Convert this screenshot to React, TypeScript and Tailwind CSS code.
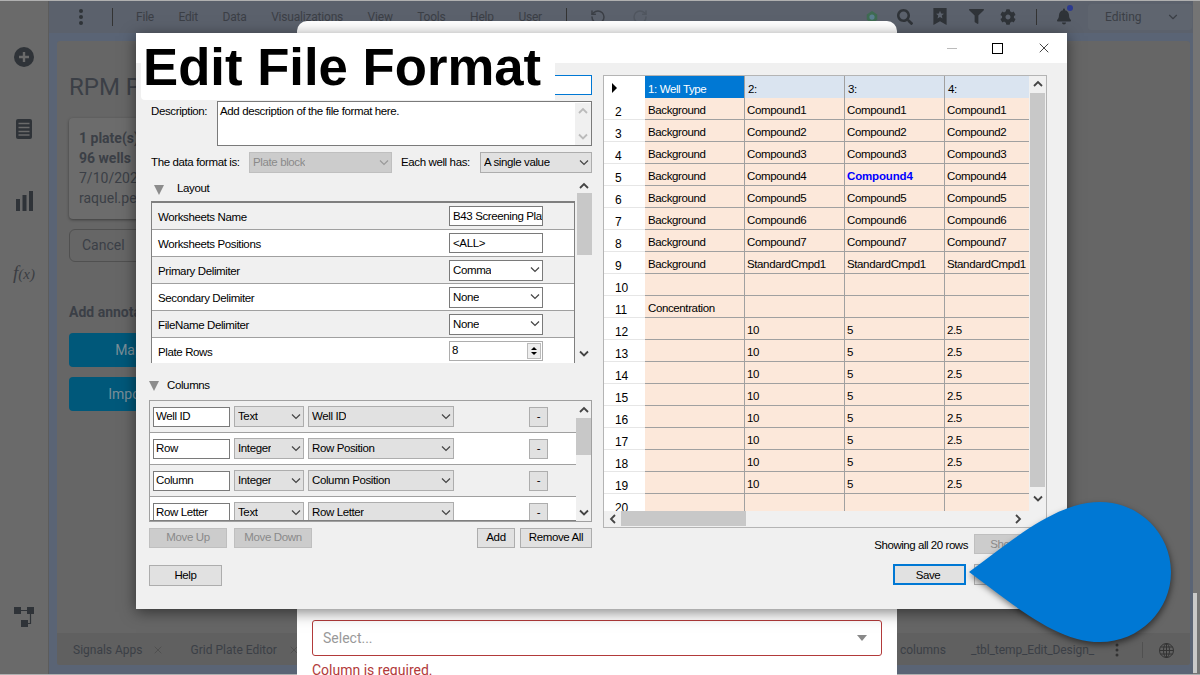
import React from "react";
import { FaSearch, FaFilter, FaCog, FaBell } from "react-icons/fa";
import { LuChevronDown, LuRotateCcw, LuRotateCw, LuX } from "react-icons/lu";

const ui = "font-['Liberation_Sans',Arial,sans-serif]";

function Chev({ dir = "down", cls = "text-[#444]", sw = 1.2 }: { dir?: "down" | "up" | "left" | "right"; cls?: string; sw?: number }) {
  const d = { down: "M1 2.5 L5 6.5 L9 2.5", up: "M1 7 L5 3 L9 7", left: "M7 1 L3 5 L7 9", right: "M3 1 L7 5 L3 9" }[dir];
  return (
    <svg width="10" height="10" viewBox="0 0 10 10" className={cls}>
      <path d={d} fill="none" stroke="currentColor" strokeWidth={sw} />
    </svg>
  );
}

function Combo({ text, w, h = "h-[21px]", bg = "bg-[#e1e1e1]", border = "border-[#adadad]", fg = "text-black", chev = "text-[#444]" }: { text: string; w: string; h?: string; bg?: string; border?: string; fg?: string; chev?: string }) {
  return (
    <div className={`flex items-center justify-between border pl-[3px] pr-[2px] ${w} ${h} ${bg} ${border} ${fg}`}>
      <span className="truncate pt-px">{text}</span>
      <Chev cls={chev} />
    </div>
  );
}

function Btn({ text, w, h = "h-[20px]", disabled }: { text: string; w: string; h?: string; disabled?: boolean }) {
  return (
    <div className={`flex items-center justify-center border ${w} ${h} ${disabled ? "border-[#bfbfbf] bg-[#cccccc] text-[#8a8a8a]" : "border-[#adadad] bg-[#e1e1e1] text-black"}`}>
      {text}
    </div>
  );
}

function Tri() {
  return (
    <svg width="10" height="10" viewBox="0 0 10 10">
      <path d="M0 0 H10 L5 10 Z" fill="#8c8c8c" />
    </svg>
  );
}

const layoutRows: [string, React.ReactNode][] = [
  ["Worksheets Name", <div className="flex h-[20px] w-[94px] items-center overflow-hidden whitespace-nowrap border border-[#7a7a7a] bg-white pl-[3px] pt-px">B43 Screening Plate</div>],
  ["Worksheets Positions", <div className="flex h-[20px] w-[94px] items-center border border-[#7a7a7a] bg-white pl-[3px] pt-px">{"<ALL>"}</div>],
  ["Primary Delimiter", <Combo text="Comma" w="w-[94px]" bg="bg-white" border="border-[#7a7a7a]" />],
  ["Secondary Delimiter", <Combo text="None" w="w-[94px]" bg="bg-white" border="border-[#7a7a7a]" />],
  ["FileName Delimiter", <Combo text="None" w="w-[94px]" bg="bg-white" border="border-[#7a7a7a]" />],
  [
    "Plate Rows",
    <div className="flex h-[20px] w-[94px] items-center justify-between border border-[#adadad] bg-white pl-[2px] pr-[1px]">
      <span>8</span>
      <span className="flex h-[16px] w-[14px] flex-col items-center justify-center gap-[2px] border border-[#bbb] bg-[#eee]">
        <span className="h-0 w-0 border-x-[3px] border-b-[3px] border-x-transparent border-b-black" />
        <span className="h-0 w-0 border-x-[3px] border-t-[3px] border-x-transparent border-t-black" />
      </span>
    </div>,
  ],
];

const colRows = [
  ["Well ID", "Text", "Well ID"],
  ["Row", "Integer", "Row Position"],
  ["Column", "Integer", "Column Position"],
  ["Row Letter", "Text", "Row Letter"],
];

const gridRows: [string, string, string, string, string, boolean?][] = [
  ["2", "Background", "Compound1", "Compound1", "Compound1"],
  ["3", "Background", "Compound2", "Compound2", "Compound2"],
  ["4", "Background", "Compound3", "Compound3", "Compound3"],
  ["5", "Background", "Compound4", "Compound4", "Compound4", true],
  ["6", "Background", "Compound5", "Compound5", "Compound5"],
  ["7", "Background", "Compound6", "Compound6", "Compound6"],
  ["8", "Background", "Compound7", "Compound7", "Compound7"],
  ["9", "Background", "StandardCmpd1", "StandardCmpd1", "StandardCmpd1"],
  ["10", "", "", "", ""],
  ["11", "Concentration", "", "", ""],
  ["12", "", "10", "5", "2.5"],
  ["13", "", "10", "5", "2.5"],
  ["14", "", "10", "5", "2.5"],
  ["15", "", "10", "5", "2.5"],
  ["16", "", "10", "5", "2.5"],
  ["17", "", "10", "5", "2.5"],
  ["18", "", "10", "5", "2.5"],
  ["19", "", "10", "5", "2.5"],
  ["20", "", "", "", ""],
];

function Grid() {
  return (
    <div className="flex h-[453px] w-[444px] flex-col border border-[#b4b4b4] bg-[#f0f0f0] leading-[14px] text-black">
      <div className="flex min-h-0 flex-1">
        <div className="h-[435px] w-[425px] overflow-hidden">
          <div className="grid h-[22px] grid-cols-[41px_100px_100px_100px_84px] grid-rows-[22px] border-b border-[#a0a0a0]">
            <div className="flex items-center bg-white pl-[8px] pt-[2px]">
              <span className="h-0 w-0 border-y-[5px] border-l-[5px] border-y-transparent border-l-black" />
            </div>
            <div className="flex items-center border-r border-[#a0a0a0] bg-[#0078d4] pl-[3px] pt-[3px] text-white">1: Well Type</div>
            <div className="flex items-center border-r border-[#a0a0a0] bg-[#dae4f0] pl-[3px] pt-[3px]">2:</div>
            <div className="flex items-center border-r border-[#a0a0a0] bg-[#dae4f0] pl-[3px] pt-[3px]">3:</div>
            <div className="flex items-center bg-[#dae4f0] pl-[3px] pt-[3px]">4:</div>
          </div>
          {gridRows.map((r) => (
            <div key={r[0]} className="grid h-[22px] grid-cols-[41px_100px_100px_100px_84px] grid-rows-[22px]">
              <div className="flex items-center border-b border-[#e6e6e6] bg-white pl-[11px] pt-[7px] text-[12px] tracking-[-0.2px]">{r[0]}</div>
              <div className="flex items-center border-b border-r border-[#a0a0a0] bg-[#fce8da] pl-[3px] pt-[3px]">{r[1]}</div>
              <div className="flex items-center border-b border-r border-[#a0a0a0] bg-[#fce8da] pl-[2px] pt-[3px]">{r[2]}</div>
              <div className={`flex items-center border-b border-r border-[#a0a0a0] bg-[#fce8da] pl-[2px] pt-[3px] ${r[5] ? "font-bold tracking-[-0.15px] text-[#0000ff]" : ""}`}>{r[3]}</div>
              <div className="flex items-center border-b border-[#a0a0a0] bg-[#fce8da] pl-[2px] pt-[3px]">{r[4]}</div>
            </div>
          ))}
        </div>
        <div className="flex w-[17px] flex-col items-center">
          <div className="flex h-[17px] items-center"><Chev dir="up" sw={1.8} /></div>
          <div className="h-[395px] w-[15px] bg-[#c8c8c8]" />
          <div className="flex h-[23px] items-center"><Chev dir="down" sw={1.8} /></div>
        </div>
      </div>
      <div className="flex h-[17px] items-center">
        <div className="flex w-[17px] justify-center"><Chev dir="left" sw={1.8} /></div>
        <div className="h-[15px] w-[125px] bg-[#c8c8c8]" />
        <div className="flex-1" />
        <div className="flex w-[34px] justify-start pl-[1px]"><Chev dir="right" sw={1.8} /></div>
      </div>
    </div>
  );
}

function Dialog() {
  return (
    <div className={`absolute left-[136px] top-[33px] flex h-[576px] w-[931px] flex-col bg-[#f0f0f0] text-[11.5px] tracking-[-0.38px] text-black shadow-[0_3px_14px_rgba(0,0,0,0.5)] ${ui}`}>
      <div className="flex h-[30px] items-center justify-end bg-white">
        <div className="mr-[35px] h-px w-[10px] bg-[#bbb]" />
        <div className="mr-[33px] h-[11px] w-[11px] border border-black" />
        <LuX className="mr-[15px] h-[16px] w-[16px] text-black" strokeWidth={1.1} />
      </div>
      <div className="flex flex-1 pl-[13px]">
        <div className="flex w-[443px] flex-col">
          <div className="mt-[12px] flex justify-end">
            <div className="h-[20px] w-[375px] border border-[#0078d4] bg-white" />
          </div>
          <div className="ml-[2px] mt-[6px] flex">
            <div className="w-[66px] pt-[2px]">Description:</div>
            <div className="flex h-[45px] w-[375px] justify-between border border-[#7a7a7a] bg-white pl-[2px] pt-[1px]">
              <span>Add description of the file format here.</span>
              <div className="flex h-full w-[16px] flex-col items-center justify-between bg-[#f0f0f0] py-[3px]">
                <Chev dir="up" cls="text-[#bbb]" sw={1.8} />
                <Chev dir="down" cls="text-[#bbb]" sw={1.8} />
              </div>
            </div>
          </div>
          <div className="ml-[2px] mt-[6px] flex items-center">
            <div className="w-[98px]">The data format is:</div>
            <Combo text="Plate block" w="w-[143px]" bg="bg-[#cccccc]" border="border-[#bfbfbf]" fg="text-[#8a8a8a]" chev="text-[#999]" />
            <div className="ml-[9px] w-[79px]">Each well has:</div>
            <Combo text="A single value" w="w-[112px]" />
          </div>
          <div className="mt-[5px] flex h-[185px]">
            <div className="ml-[2px] flex w-[424px] flex-col">
              <div className="flex h-[23px] items-center pl-[3px]">
                <Tri />
                <span className="ml-[13px] pb-[2px]">Layout</span>
              </div>
              <div className="h-[162px] overflow-hidden border-x border-t-2 border-x-[#7f7f7f] border-t-[#7f7f7f] bg-white">
                {layoutRows.map(([label, ctl], i) => (
                  <div key={label} className={`flex h-[27px] shrink-0 items-center justify-between border-b border-[#a0a0a0] pl-[6px] pr-[31px] ${i % 2 === 0 ? "bg-[#f0f0f0]" : "bg-white"}`}>
                    <span className="pt-[3px]">{label}</span>
                    {ctl}
                  </div>
                ))}
              </div>
            </div>
            <div className="ml-px flex w-[16px] flex-col items-center">
              <div className="flex h-[15px] items-center"><Chev dir="up" sw={1.8} /></div>
              <div className="h-[62px] w-[15px] bg-[#c8c8c8]" />
              <div className="flex-1" />
              <div className="flex h-[18px] items-center"><Chev dir="down" sw={1.8} /></div>
            </div>
          </div>
          <div className="flex h-[37px] items-center pt-[8px]">
            <Tri />
            <span className="ml-[8px]">Columns</span>
          </div>
          <div className="flex h-[122px] border border-[#a0a0a0]">
            <div className="w-[426px] overflow-hidden border-b border-[#7f7f7f]">
              {colRows.map((r, i) => (
                <div key={r[0]} className={`flex h-[32px] items-center border-b border-[#a0a0a0] pl-[3px] ${i % 2 === 0 ? "bg-[#f0f0f0]" : "bg-white"}`}>
                  <div className="flex h-[20px] w-[77px] items-center border border-[#7a7a7a] bg-white pl-[2px]">{r[0]}</div>
                  <div className="ml-[4px]"><Combo text={r[1]} w="w-[70px]" /></div>
                  <div className="ml-[4px]"><Combo text={r[2]} w="w-[146px]" /></div>
                  <div className="ml-[75px]"><Btn text="-" w="w-[19px]" /></div>
                </div>
              ))}
            </div>
            <div className="flex flex-1 flex-col items-center">
              <div className="flex h-[17px] items-center"><Chev dir="up" sw={1.8} /></div>
              <div className="h-[37px] w-[15px] bg-[#c8c8c8]" />
              <div className="flex-1" />
              <div className="flex h-[16px] items-center"><Chev dir="down" sw={1.8} /></div>
            </div>
          </div>
          <div className="mt-[6px] flex">
            <Btn text="Move Up" w="w-[78px]" disabled />
            <div className="ml-[7px]"><Btn text="Move Down" w="w-[78px]" disabled /></div>
            <div className="ml-auto"><Btn text="Add" w="w-[38px]" /></div>
            <div className="ml-[5px]"><Btn text="Remove All" w="w-[72px]" /></div>
          </div>
          <div className="mt-[17px]"><Btn text="Help" w="w-[73px]" h="h-[21px]" /></div>
        </div>
        <div className="ml-[11px] flex w-[444px] flex-col pt-[12px]">
          <Grid />
          <div className="mt-[6px] flex items-center justify-end">
            <span className="mr-[6px] pt-[3px] tracking-[-0.45px]">Showing all 20 rows</span>
            <Btn text="Show all" w="w-[73px]" disabled />
          </div>
          <div className="mt-[10px] flex justify-end gap-[8px]">
            <div className="flex h-[21px] w-[73px] items-center justify-center border-2 border-[#0078d4] bg-[#e1e1e1] pr-[3px] pt-px">Save</div>
            <Btn text="Cancel" w="w-[73px]" h="h-[21px]" />
          </div>
        </div>
      </div>
    </div>
  );
}

function Background() {
  const menu = ["File", "Edit", "Data", "Visualizations", "View", "Tools", "Help", "User"];
  return (
    <div className="flex h-full w-full font-['Roboto',sans-serif] text-[#3b3f46]">
      <div className="flex h-full w-[49px] flex-col items-center border-r border-[#5c5c5c] bg-[#6a6a6a] text-[#2f3338]">
        <svg className="mt-[47px]" width="20" height="20" viewBox="0 0 20 20">
          <circle cx="10" cy="10" r="10" fill="#2f3338" />
          <path d="M10 5v10M5 10h10" stroke="#6a6a6a" strokeWidth="2.4" />
        </svg>
        <svg className="mt-[52px]" width="16" height="20" viewBox="0 0 16 20">
          <rect x="0" y="0" width="16" height="20" rx="2" fill="#2f3338" />
          <path d="M2.5 4.5h11M2.5 8.500h11M2.5 12.500h11M2.500 16h11" stroke="#6a6a6a" strokeWidth="1.4" />
        </svg>
        <svg className="mt-[52px]" width="17" height="20" viewBox="0 0 17 20">
          <path d="M0 8h4v12H0zM6.500 4h4v16h-4zM13 0h4v20h-4z" fill="#2f3338" />
        </svg>
        <span className="mt-[48px] font-['Liberation_Serif',serif] text-[15px] italic leading-[28px] text-[#3a3d42]">
          <span className="text-[19px]">f</span>(x)
        </span>
        <svg className="mt-auto mb-[48px]" width="20" height="20" viewBox="0 0 20 20">
          <path d="M0 0h7v7H0zM13 0h7v7h-7zM7 20h7v-7H7z" fill="#2f3338" />
          <path d="M7 3.500h6M16.500 7v9.500H14" stroke="#2f3338" strokeWidth="1.2" fill="none" />
        </svg>
      </div>
      <div className="flex min-w-0 flex-1 flex-col bg-[#5a6475]">
        <div className="flex h-[33px] items-center bg-[#5b616c] text-[12px] tracking-[-0.2px]">
          <svg className="ml-[29px]" width="6" height="18" viewBox="0 0 6 18">
            <circle cx="3" cy="3" r="2" fill="#2f3338" /><circle cx="3" cy="9" r="2" fill="#2f3338" /><circle cx="3" cy="15" r="2" fill="#2f3338" />
          </svg>
          <div className="ml-[28px] h-[18px] w-px bg-[#333]" />
          {menu.map((m, i) => <span key={m} className={i === 0 ? "ml-[23px]" : "ml-[24.500px]"}>{m}</span>)}
          <div className="ml-[24px] h-[18px] w-px bg-[#333]" />
          <LuRotateCcw className="ml-[23px] h-[16px] w-[16px] text-[#3b3f46]" strokeWidth={2.2} />
          <LuRotateCw className="ml-[26px] h-[16px] w-[16px] text-[#50565f]" strokeWidth={2.2} />
          <svg className="ml-[217px]" width="14" height="16" viewBox="0 0 16 16">
            <path d="M8 1l6 4v6l-6 4-6-4V5z" fill="#3f6b52" /><circle cx="8" cy="8" r="3" fill="#5a7f8f" />
          </svg>
          <FaSearch className="ml-[18px] h-[16px] w-[16px] text-[#2f3338]" />
          <svg className="ml-[20px]" width="14" height="17" viewBox="0 0 14 18">
            <path fillRule="evenodd" d="M0 0h14v18l-7-4-7 4zM7 3l1.200 2.800 3 .2-2.300 2 .7 3L7 9.400 4.400 11l.7-3-2.300-2 3-.2z" fill="#2f3338" />
          </svg>
          <FaFilter className="ml-[22px] h-[17px] w-[15px] text-[#2f3338]" />
          <FaCog className="ml-[16px] h-[16px] w-[16px] text-[#2f3338]" />
          <div className="ml-[20px] h-[16px] w-px bg-[#333]" />
          <div className="relative ml-[20px]">
            <FaBell className="h-[17px] w-[14px] text-[#2f3338]" />
            <span className="absolute right-[-2px] top-[-3px] h-[6px] w-[6px] rounded-full bg-[#2c3a8f]" />
          </div>
          <div className="ml-[17px] flex h-[26px] w-[104px] shrink-0 items-center justify-between rounded-[3px] bg-[#5f656f] pl-[17px] pr-[12px]">
            <span className="tracking-normal">Editing</span>
            <LuChevronDown className="h-[14px] w-[14px]" />
          </div>
        </div>
        <div className="ml-[8px] mr-[3px] mt-[8px] flex h-[624px] flex-col rounded-[3px] bg-[#666]">
          <div className="flex-1 pl-[12px]">
            <div className="mt-[30px] text-[24px] leading-[32px]">RPM Plate</div>
            <div className="mt-[15px] h-[101px] w-[200px] rounded-[4px] bg-[#6c6c6c] pl-[10px] pt-[10px] text-[14px] leading-[20px] shadow-[0_1px_3px_rgba(0,0,0,0.4)]">
              <div className="font-bold">1 plate(s)</div>
              <div className="font-bold">96 wells</div>
              <div>7/10/2021</div>
              <div>raquel.pe</div>
            </div>
            <div className="mt-[10px] flex h-[33px] w-[100px] items-center rounded-[6px] border border-[#505050] pl-[12px] text-[14px]">Cancel</div>
            <div className="mt-[41px] text-[14px] font-bold leading-[18px]">Add annotations</div>
            <div className="mt-[12px] flex h-[34px] w-[120px] items-center justify-center rounded-[4px] bg-[#00587a] text-[14px] text-[#7a8f99]">Map</div>
            <div className="mt-[10px] flex h-[34px] w-[120px] items-center justify-center rounded-[4px] bg-[#00587a] text-[14px] text-[#7a8f99]">Import</div>
          </div>
          <div className="flex h-[32px] items-center rounded-b-[3px] bg-[#606060] pt-[2px] text-[12px]">
            <span className="ml-[16px]">Signals Apps</span>
            <LuX className="ml-[9px] h-[12px] w-[12px] text-[#505050]" />
            <span className="ml-[27px]">Grid Plate Editor</span>
            <LuX className="ml-[11px] h-[12px] w-[12px] text-[#505050]" />
            <span className="ml-auto">4 columns</span>
            <span className="ml-[25px] tracking-[-0.1px]">_tbl_temp_Edit_Design_</span>
            <svg className="ml-[21px]" width="4" height="14" viewBox="0 0 4 14">
              <circle cx="2" cy="2" r="1.500" fill="#333" /><circle cx="2" cy="7" r="1.500" fill="#333" /><circle cx="2" cy="12" r="1.500" fill="#333" />
            </svg>
            <div className="ml-[23px] h-[16px] w-px bg-[#505050]" />
            <svg className="ml-[16px] mr-[16px]" width="15" height="15" viewBox="0 0 15 15" fill="none" stroke="#333" strokeWidth="1">
              <circle cx="7.500" cy="7.500" r="7" />
              <ellipse cx="7.500" cy="7.500" rx="3" ry="7" />
              <path d="M7.500 .5v14M1.500 4h12M.5 7.500h14M1.500 11h12" />
            </svg>
          </div>
        </div>
      </div>
      <div className="w-[7px] shrink-0 bg-[#747474]" />
    </div>
  );
}

export default function App() {
  return (
    <div className="relative h-[675px] w-[1200px] overflow-hidden bg-[#666]">
      <Background />
      <div className="absolute inset-x-0 top-0 h-px bg-[#b0b0b0]" />
      <div className="absolute inset-x-0 bottom-0 h-px bg-[#b0b0b0]" />
      <div className="absolute bottom-[2px] left-[1193px] h-[80px] w-[4px] bg-[#c9c9c9]" />
      <div className="absolute left-[297px] top-[21px] flex h-[669px] w-[600px] flex-col justify-end rounded-t-[10px] bg-white px-[15px] font-['Roboto',sans-serif]">
        <div className="mb-[9px] h-[14px] text-[13px] leading-[14px] text-[#b23a3a]">Column:</div>
        <div className="flex h-[36px] w-[570px] items-center justify-between rounded-[3px] border border-[#b23a3a] bg-white pl-[10px] pr-[14px] text-[14px] text-[#999]">
          <span>Select...</span>
          <span className="h-0 w-0 border-x-[5px] border-t-[6px] border-x-transparent border-t-[#888]" />
        </div>
        <div className="mb-[6px] mt-[4px] h-[24px] text-[14px] text-[#b23a3a]">Column is required.</div>
      </div>
      <Dialog />
      <div className={`absolute left-[141px] top-[33px] flex h-[67px] w-[414px] items-center rounded-bl-[4px] bg-white pl-[2px] pt-[2px] text-[52.700px] font-bold leading-none text-black ${ui}`}>
        Edit File Format
      </div>
      <svg className="absolute left-[965px] top-[498px]" width="212" height="150" viewBox="0 0 212 150" style={{ filter: "drop-shadow(1px 3px 3px rgba(0,0,0,0.5))" }}>
        <path d="M4 74 C50 40 92 4 135 4 C175 4 206 36 206 74 C206 112 175 144 135 144 C92 144 50 108 4 74 Z" fill="#0078d4" />
      </svg>
    </div>
  );
}
